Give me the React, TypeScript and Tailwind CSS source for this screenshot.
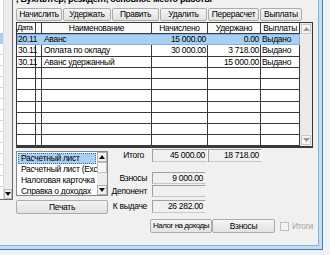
const font = "font-['Liberation_Sans_Narrow','Liberation_Sans',Arial,sans-serif]"

type Row = { d: string; n: string; a: string; u: string; v: string; sel?: boolean }

const rows: Row[] = [
  { d: '20.11', n: 'Аванс', a: '15 000.00', u: '0.00', v: 'Выдано', sel: true },
  { d: '30.11', n: 'Оплата по окладу', a: '30 000.00', u: '3 718.00', v: 'Выдано' },
  { d: '30.11', n: 'Аванс удержанный', a: '', u: '15 000.00', v: 'Выдано' },
  { d: '', n: '', a: '', u: '', v: '' },
  { d: '', n: '', a: '', u: '', v: '' },
  { d: '', n: '', a: '', u: '', v: '' },
  { d: '', n: '', a: '', u: '', v: '' },
  { d: '', n: '', a: '', u: '', v: '' },
  { d: '', n: '', a: '', u: '', v: '' },
  { d: '', n: '', a: '', u: '', v: '' },
]

const rowHeights = ['h-[11px]', 'h-[12px]', 'h-[11px]', 'h-[12px]', 'h-[11px]', 'h-[12px]', 'h-[11px]', 'h-[12px]', 'h-[11px]', 'h-[11px]']

function Btn({ label, w, extra = '' }: { label: string; w: string; extra?: string }) {
  return (
    <div
      className={`${w} ${extra} h-full flex items-center justify-center border border-[#acacac] rounded-[2px] bg-gradient-to-b from-[#f4f4f4] to-[#e2e2e2] leading-none whitespace-nowrap`}
    >
      {label}
    </div>
  )
}

function Arrow({ up }: { up?: boolean }) {
  return (
    <svg width="7" height="4" viewBox="0 0 7 4">
      {up ? <path d="M0 4 L3.5 0 L7 4 Z" fill="#9a9a9a" /> : <path d="M0 0 L3.5 4 L7 0 Z" fill="#9a9a9a" />}
    </svg>
  )
}

function ArrowDark({ up }: { up?: boolean }) {
  return (
    <svg width="6" height="4" viewBox="0 0 6 4">
      {up ? <path d="M0 4 L3 0 L6 4 Z" fill="#111" /> : <path d="M0 0 L3 4 L6 0 Z" fill="#111" />}
    </svg>
  )
}

function LeftStrip() {
  return (
    <div className="w-[13px] flex flex-col">
      <div className="h-[200px] flex border-r border-b border-[#6a6a6a] bg-white">
        <div className="w-[3px] flex flex-col pt-[33px]">
          <div className="h-[11px] bg-[#a9d0f2]" />
          {[0, 1, 2, 3, 4, 5, 6, 7, 8, 9, 10, 11, 12].map((i) => (
            <div key={i} className="h-[11px] border-b border-[#d8d8d8]" />
          ))}
        </div>
        <div className="flex-1 flex flex-col justify-end bg-[#ececec] border-l border-[#dcdcdc]">
          <div className="h-[10px] flex items-center justify-center bg-[#f2f2f2] border border-[#b8b8b8]">
            <ArrowDark />
          </div>
        </div>
      </div>
    </div>
  )
}

function Grid() {
  return (
    <div className="flex h-[126px] w-[297px]">
      <div className="w-[284px] flex flex-col border-l border-t border-b-2 border-[#3a3a3a] bg-white">
        <div className="flex h-[11px] bg-[#fafafa] leading-[10px]">
          <div className="w-[19px] border-r border-b border-[#3a3a3a] text-[8px] tracking-[-0.6px] whitespace-nowrap">Дата</div>
          <div className="w-[6px] border-r border-b border-[#3a3a3a]" />
          <div className="w-[110px] border-r border-b border-[#3a3a3a] text-center">Наименование</div>
          <div className="w-[56px] border-r border-b border-[#3a3a3a] text-center">Начислено</div>
          <div className="w-[53px] border-r border-b border-[#3a3a3a] text-center">Удержано</div>
          <div className="w-[39px] border-r border-b border-[#3a3a3a] text-right pr-[2px]">Выплаты</div>
        </div>
        {rows.map((r, i) => {
          const v = r.sel ? 'border-r-transparent' : 'border-r-[#3a3a3a]'
          return (
            <div
              key={i}
              className={`flex ${rowHeights[i]} leading-[10px] ${r.sel ? 'bg-[#a9d0f2] outline outline-1 -outline-offset-1 outline-[#7fb4e6]' : ''}`}
            >
              <div className={`w-[19px] border-r border-b border-b-[#3a3a3a] ${v} pl-[1px] whitespace-nowrap`}>{r.d}</div>
              <div className={`w-[6px] border-r border-b border-b-[#3a3a3a] ${v}`} />
              <div className={`w-[110px] border-r border-b border-b-[#3a3a3a] ${v} pl-[2px] whitespace-nowrap`}>{r.n}</div>
              <div className={`w-[56px] border-r border-b border-b-[#3a3a3a] ${v} text-right pr-[1px]`}>{r.a}</div>
              <div className={`w-[53px] border-r border-b border-b-[#3a3a3a] ${v} text-right pr-[1px]`}>{r.u}</div>
              <div className={`w-[39px] border-r border-b border-b-[#3a3a3a] ${r.sel ? 'border-r-[#7fb4e6]' : 'border-r-[#3a3a3a]'} pl-[1px]`}>{r.v}</div>
            </div>
          )
        })}
      </div>
      <div className="w-[13px] flex flex-col justify-between bg-[#eaeaea] border-t border-r border-b-2 border-[#3a3a3a] px-[1px] py-[1px]">
        <div className="h-[10px] flex items-center justify-center bg-[#f4f4f4] border border-[#cacaca]">
          <Arrow up />
        </div>
        <div className="h-[10px] flex items-center justify-center bg-[#f4f4f4] border border-[#cacaca]">
          <Arrow />
        </div>
      </div>
    </div>
  )
}

function Field({ value, w }: { value: string; w: string }) {
  return (
    <div
      className={`${w} h-full border-t border-l border-[#a0a0a0] border-b border-r border-b-[#c8c8c8] border-r-[#f8f8f8] bg-[#f0f0f0] text-right pr-[2px] flex items-center justify-end leading-none`}
    >
      {value}
    </div>
  )
}

function Label({ text }: { text: string }) {
  return <div className="w-[44px] text-right pr-[5px] whitespace-nowrap leading-none flex items-center justify-end">{text}</div>
}

function Dialog() {
  return (
    <div className="flex-1 flex flex-col pl-[3px]">
      <div className="h-[7px] overflow-hidden">
        <div className="-mt-[6px] leading-[11px] font-bold whitespace-nowrap text-[9px]">
          , Бухгалтер, резидент, основное место работы
        </div>
      </div>
      <div className="mt-[1px] h-[13px] flex gap-[1px]">
        <Btn label="Начислить" w="w-[46px]" />
        <Btn label="Удержать" w="w-[48px]" />
        <Btn label="Править" w="w-[47px]" />
        <Btn label="Удалить" w="w-[47px]" />
        <Btn label="Перерасчет" w="w-[51px]" />
        <Btn label="Выплаты" w="w-[42px]" />
      </div>
      <div className="mt-[1px]">
        <Grid />
      </div>
      <div className="flex">
        <div className="w-[92px] flex flex-col pt-[3px]">
          <div className="h-[45px] flex border border-[#828790] bg-white">
            <div className="flex-1 flex flex-col p-[1px] leading-[11px] whitespace-nowrap overflow-hidden">
              <div className="h-[11px] bg-[#a9d0f2] border border-dotted border-[#3b6ea5] pl-[2px] leading-[9px]">
                Расчетный лист
              </div>
              <div className="h-[11px] pl-[3px]">Расчетный лист (Excel)</div>
              <div className="h-[11px] pl-[3px]">Налоговая карточка</div>
              <div className="h-[11px] pl-[3px]">Справка о доходах</div>
            </div>
            <div className="w-[10px] flex flex-col bg-[#ececec]">
              <div className="h-[10px] flex items-center justify-center bg-[#f2f2f2] border border-[#b0b0b0]">
                <ArrowDark up />
              </div>
              <div className="h-[11px] bg-[#f6f6f6] border border-[#c0c0c0]" />
              <div className="flex-1" />
              <div className="h-[10px] flex items-center justify-center bg-[#f2f2f2] border border-[#b0b0b0]">
                <ArrowDark />
              </div>
            </div>
          </div>
          <div className="mt-[4px] h-[14px]">
            <Btn label="Печать" w="w-full" />
          </div>
        </div>
        <div className="flex-1 flex flex-col">
          <div className="h-[14px] flex pt-[1px]">
            <div className="w-[44px] text-right pr-[8px] leading-none flex items-center justify-end">Итого</div>
            <Field value="45 000.00" w="w-[56px]" />
            <Field value="18 718.00" w="w-[54px]" />
          </div>
          <div className="mt-[10px] h-[12px] flex">
            <Label text="Взносы" />
            <Field value="9 000.00" w="w-[54px]" />
          </div>
          <div className="mt-[1px] h-[12px] flex">
            <Label text="Депонент" />
            <Field value="" w="w-[54px]" />
          </div>
          <div className="mt-[3px] h-[13px] flex">
            <Label text="К выдаче" />
            <Field value="26 282.00" w="w-[54px]" />
          </div>
          <div className="mt-[6px] h-[14px] flex items-center pl-[42px]">
            <Btn label="Налог на доходы" w="w-[62px]" extra="tracking-[-0.5px] text-[8px]" />
            <Btn label="Взносы" w="w-[63px]" />
            <div className="ml-[5px] w-[9px] h-[9px] border border-[#bcbcbc] bg-[#f4f4f4]" />
            <div className="ml-[3px] text-[#a3a3a3] leading-none">Итоги</div>
          </div>
        </div>
      </div>
    </div>
  )
}

export default function App() {
  return (
    <div className={`w-[330px] h-[255px] overflow-hidden bg-[#eef3f8] ${font} text-[8.5px] tracking-[-0.3px] text-black`}>
      <div className="w-[323px] h-[250px] flex flex-col border-r border-b border-[#3d7fb4]">
        <div className="flex-1 flex flex-col border-r-[3px] border-b-[3px] border-[#c4ddf2]">
          <div className="flex-1 flex border-r border-b border-[#86b4da] bg-[#f0f0f0]">
            <LeftStrip />
            <Dialog />
          </div>
        </div>
      </div>
    </div>
  )
}
